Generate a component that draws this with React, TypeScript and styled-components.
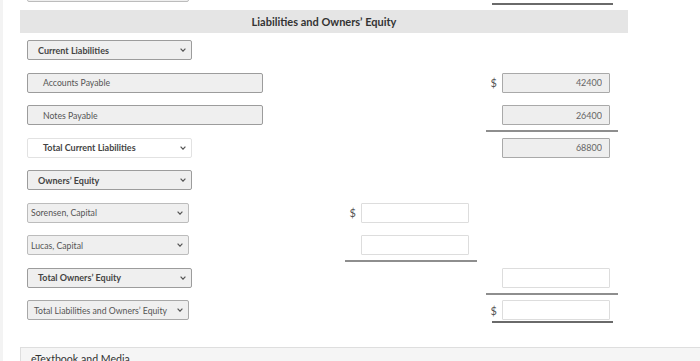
import styled, { createGlobalStyle, css } from 'styled-components';

const GlobalStyle = createGlobalStyle`
  html, body {
    margin: 0;
    padding: 0;
    background: #fff;
  }
  body {
    font-family: Lato, 'Open Sans', 'Liberation Sans', sans-serif;
    color: #444;
  }
`;

type LabelKind = 'heading' | 'subtotal' | 'account' | 'grand' | 'text';
type Rule = 'single' | 'double';

interface Amount {
  value?: string;
  dollar?: boolean;
  gray?: boolean;
  rule?: Rule;
  bare?: boolean;
}

interface Line {
  label: string;
  kind: LabelKind;
  mid?: Amount;
  right?: Amount;
}

const LABEL = {
  heading: { width: 165, pad: 10, bg: '#efefef', border: '#9c9c9c', weight: 700 },
  subtotal: { width: 165, pad: 15, bg: '#ffffff', border: '#e2e2e2', weight: 700 },
  account: { width: 162, pad: 3, bg: '#efefef', border: '#bcbcbc', weight: 400 },
  grand: { width: 162, pad: 6, bg: '#efefef', border: '#a8a8a8', weight: 400 },
  text: { width: 236, pad: 15, bg: '#efefef', border: '#9c9c9c', weight: 400 },
};

const S = {
  Frame: styled.div`
    width: 700px;
    height: 361px;
    overflow: hidden;
    box-sizing: border-box;
    border-left: 3px solid #f3f3f3;
  `,

  Sheet: styled.div`
    display: flex;
    flex-direction: column;
    margin-top: -18px;
    padding-left: 17px;
  `,

  Grid: styled.div`
    display: grid;
    grid-template-columns: 309px 132px 132px;
    column-gap: 9px;
    grid-auto-rows: 20px;
    row-gap: 12.5px;
    padding-left: 7px;
  `,

  Header: styled.h2`
    box-sizing: border-box;
    width: 608px;
    height: 23px;
    margin: 8px 0 7px;
    display: flex;
    align-items: center;
    justify-content: center;
    background: #e5e5e5;
    font-size: 11px;
    font-weight: 700;
    color: #333;
  `,

  LabelCell: styled.div`
    display: flex;
    align-items: center;
  `,

  LabelBox: styled.div<{ $kind: LabelKind }>`
    box-sizing: border-box;
    display: flex;
    align-items: center;
    justify-content: space-between;
    width: ${({ $kind }) => LABEL[$kind].width}px;
    height: 20px;
    padding: 0 5px 0 ${({ $kind }) => LABEL[$kind].pad}px;
    border: 1px solid ${({ $kind }) => LABEL[$kind].border};
    border-radius: 2px;
    background: ${({ $kind }) => LABEL[$kind].bg};
    font-size: ${({ $kind }) => (LABEL[$kind].weight === 700 ? '9px' : '8.7px')};
    font-weight: ${({ $kind }) => LABEL[$kind].weight};
    color: ${({ $kind }) => (LABEL[$kind].weight === 700 ? '#444' : '#555')};
    white-space: nowrap;
  `,

  AmountCell: styled.div<{ $rule?: Rule }>`
    display: flex;
    align-items: center;
    justify-content: flex-end;
    padding-right: 8px;

    ${({ $rule }) =>
      $rule === 'single' &&
      css`
        padding-bottom: 5px;
        border-bottom: 2px solid #8e8e8e;
        margin-bottom: -7px;
      `}

    ${({ $rule }) =>
      $rule === 'double' &&
      css`
        margin: 0 5px -3px 6px;
        padding: 0 3px 1px 0;
        border-bottom: 2px solid #6a6a6a;
      `}
  `,

  Dollar: styled.span`
    margin-right: 5px;
    font-size: 11px;
    color: #555;
  `,

  Field: styled.input<{ $gray?: boolean }>`
    box-sizing: border-box;
    width: 108px;
    height: 20px;
    margin: 0;
    padding: 0 7px;
    border: 1px solid ${({ $gray }) => ($gray ? '#a9a9a9' : '#dddddd')};
    border-radius: 1px;
    background: ${({ $gray }) => ($gray ? '#eeeeee' : '#ffffff')};
    font-family: Lato, 'Open Sans', sans-serif;
    font-size: 9px;
    color: #666;
    text-align: right;
    outline: none;
  `,

  Footer: styled.div`
    margin-top: 27px;
    padding: 5px 10px;
    border-top: 1px solid #dedede;
    border-left: 1px solid #dedede;
    background: #f5f5f5;
    font-size: 10.6px;
    color: #333;
  `,
};

const lines: Line[] = [
  { label: 'Current Liabilities', kind: 'heading' },
  { label: 'Accounts Payable', kind: 'text', right: { value: '42400', dollar: true, gray: true } },
  { label: 'Notes Payable', kind: 'text', right: { value: '26400', gray: true, rule: 'single' } },
  { label: 'Total Current Liabilities', kind: 'subtotal', right: { value: '68800', gray: true } },
  { label: 'Owners\u2019 Equity', kind: 'heading' },
  { label: 'Sorensen, Capital', kind: 'account', mid: { dollar: true } },
  { label: 'Lucas, Capital', kind: 'account', mid: { rule: 'single' } },
  { label: 'Total Owners\u2019 Equity', kind: 'heading', right: { rule: 'single' } },
  { label: 'Total Liabilities and Owners\u2019 Equity', kind: 'grand', right: { dollar: true, rule: 'double' } },
];

function Chevron() {
  return (
    <svg width="6" height="4" viewBox="0 0 6 4">
      <path d="M0.6 0.7 L3 3.2 L5.4 0.7" fill="none" stroke="#555" strokeWidth="1.2" />
    </svg>
  );
}

function AmountBox({ amount }: { amount?: Amount }) {
  if (!amount) return <div />;
  return (
    <S.AmountCell $rule={amount.rule}>
      {amount.dollar && <S.Dollar>$</S.Dollar>}
      {!amount.bare && <S.Field readOnly value={amount.value ?? ''} $gray={amount.gray} />}
    </S.AmountCell>
  );
}

function LineRow({ line }: { line: Line }) {
  return (
    <>
      <S.LabelCell>
        <S.LabelBox $kind={line.kind}>
          <span>{line.label}</span>
          {line.kind !== 'text' && <Chevron />}
        </S.LabelBox>
      </S.LabelCell>
      <AmountBox amount={line.mid} />
      <AmountBox amount={line.right} />
    </>
  );
}

export default function App() {
  return (
    <>
      <GlobalStyle />
      <S.Frame>
        <S.Sheet>
          {/* tail of the assets section, scrolled mostly out of view */}
          <S.Grid>
            <LineRow line={{ label: '', kind: 'account', right: { rule: 'double', bare: true } }} />
          </S.Grid>

          <S.Header>Liabilities and Owners’ Equity</S.Header>

          <S.Grid>
            {lines.map((line) => (
              <LineRow key={line.label} line={line} />
            ))}
          </S.Grid>

          <S.Footer>eTextbook and Media</S.Footer>
        </S.Sheet>
      </S.Frame>
    </>
  );
}
